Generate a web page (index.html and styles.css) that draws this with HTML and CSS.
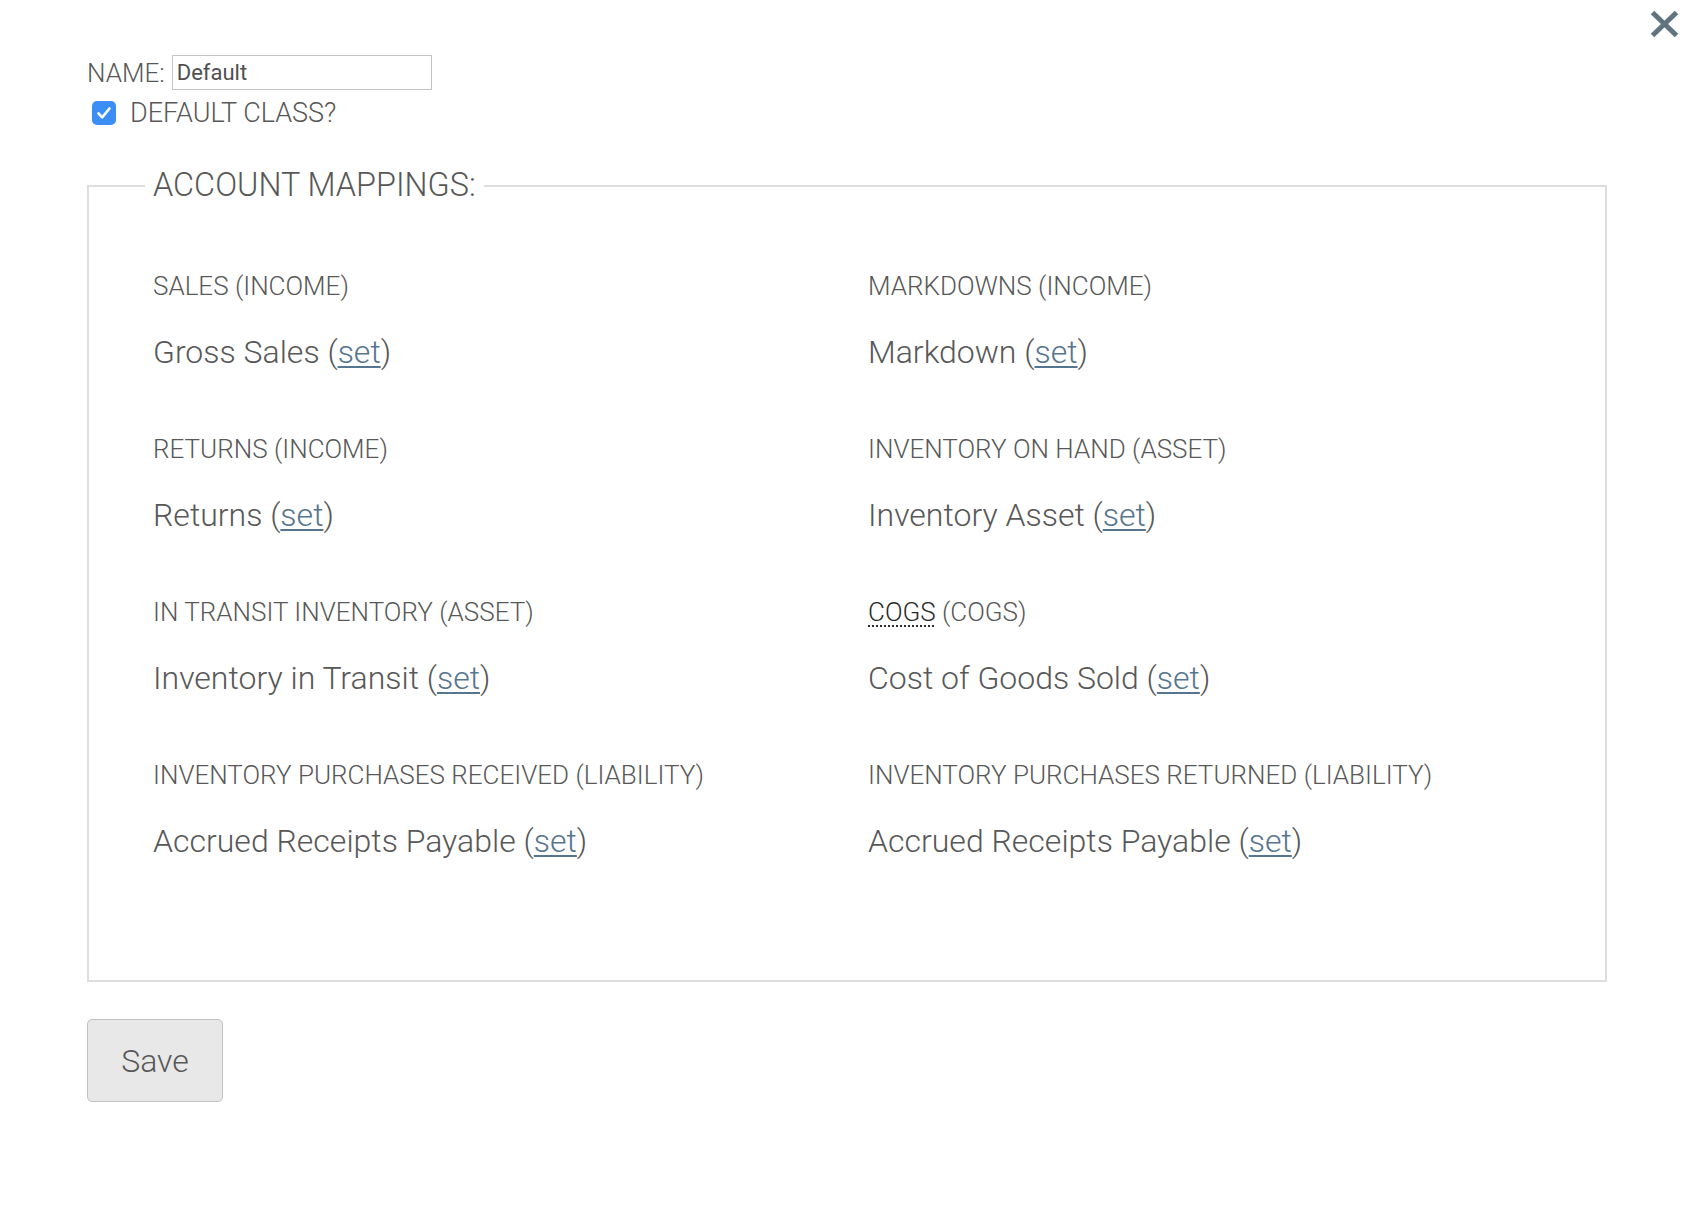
FILE: index.html
```html
<!DOCTYPE html>
<html lang="en">
<head>
<meta charset="utf-8">
<title>Class – Account Mappings</title>
<link rel="stylesheet" href="styles.css">
</head>
<body>
<div class="page">
  <button class="close" type="button" aria-label="Close">
    <svg viewBox="0 0 29 28" width="29" height="28" aria-hidden="true">
      <line x1="2.5" y1="2.5" x2="26.5" y2="25.5" />
      <line x1="26.5" y1="2.5" x2="2.5" y2="25.5" />
    </svg>
  </button>

  <form class="class-form">
    <div class="name-row">
      <label class="field-label" for="name">NAME:</label>
      <input class="text-input" id="name" type="text" value="Default">
    </div>
    <label class="check-row">
      <span class="checkbox">
        <svg viewBox="0 0 24 24" width="24" height="24" aria-hidden="true">
          <path d="M6.5 12.5 L10.2 16.3 L17.5 7.5" />
        </svg>
      </span>
      <span class="field-label check-label">DEFAULT CLASS?</span>
    </label>

    <fieldset class="mappings">
      <legend class="mappings-title">ACCOUNT MAPPINGS:</legend>
      <div class="grid">
        <div class="mapping">
          <div class="mapping-label">SALES (INCOME)</div>
          <div class="mapping-value">Gross Sales (<a href="#">set</a>)</div>
        </div>
        <div class="mapping">
          <div class="mapping-label">MARKDOWNS (INCOME)</div>
          <div class="mapping-value">Markdown (<a href="#">set</a>)</div>
        </div>
        <div class="mapping">
          <div class="mapping-label">RETURNS (INCOME)</div>
          <div class="mapping-value">Returns (<a href="#">set</a>)</div>
        </div>
        <div class="mapping">
          <div class="mapping-label">INVENTORY ON HAND (ASSET)</div>
          <div class="mapping-value">Inventory Asset (<a href="#">set</a>)</div>
        </div>
        <div class="mapping">
          <div class="mapping-label">IN TRANSIT INVENTORY (ASSET)</div>
          <div class="mapping-value">Inventory in Transit (<a href="#">set</a>)</div>
        </div>
        <div class="mapping">
          <div class="mapping-label"><abbr title="Cost of Goods Sold">COGS</abbr> (COGS)</div>
          <div class="mapping-value">Cost of Goods Sold (<a href="#">set</a>)</div>
        </div>
        <div class="mapping">
          <div class="mapping-label">INVENTORY PURCHASES RECEIVED (LIABILITY)</div>
          <div class="mapping-value">Accrued Receipts Payable (<a href="#">set</a>)</div>
        </div>
        <div class="mapping">
          <div class="mapping-label">INVENTORY PURCHASES RETURNED (LIABILITY)</div>
          <div class="mapping-value">Accrued Receipts Payable (<a href="#">set</a>)</div>
        </div>
      </div>
    </fieldset>

    <button class="save" type="button">Save</button>
  </form>
</div>
</body>
</html>
```

FILE: styles.css
```css
* {
  box-sizing: border-box;
}

html, body {
  margin: 0;
  padding: 0;
  background: #ffffff;
}

body {
  font-family: Roboto, "Liberation Sans", Arial, sans-serif;
  font-weight: 300;
  color: #585858;
}

.page {
  position: relative;
  min-height: 1220px;
  padding: 55px 77px 0 87px;
}

.close {
  position: absolute;
  top: 10px;
  left: 1650px;
  width: 29px;
  height: 28px;
  padding: 0;
  border: 0;
  background: transparent;
  cursor: pointer;
}

.close svg {
  display: block;
}

.close line {
  stroke: #5f7380;
  stroke-width: 5;
}

.class-form {
  display: flex;
  flex-direction: column;
  align-items: flex-start;
}

.name-row {
  display: flex;
  align-items: center;
  gap: 7px;
  height: 35px;
}

.field-label {
  font-size: 26px;
  line-height: 30px;
  font-weight: 300;
  color: #585858;
}

.check-label {
  font-size: 27px;
}

.text-input {
  width: 260px;
  height: 35px;
  margin: 0;
  padding: 0 4px;
  border: 1px solid #c4c4c4;
  border-radius: 0;
  font-family: Roboto, "Liberation Sans", Arial, sans-serif;
  font-size: 22px;
  font-weight: 400;
  color: #505050;
  background: #fff;
  outline: none;
}

.check-row {
  display: flex;
  align-items: center;
  gap: 14px;
  margin-top: 8px;
  height: 30px;
  cursor: pointer;
}

.checkbox {
  display: block;
  width: 24px;
  height: 24px;
  margin-left: 5px;
  border-radius: 5px;
  background: #3a8ef6;
}

.checkbox svg {
  display: block;
}

.checkbox path {
  fill: none;
  stroke: #ffffff;
  stroke-width: 2.6;
  stroke-linecap: round;
  stroke-linejoin: round;
}

.mappings {
  width: 1520px;
  margin: 39px 0 0 0;
  padding: 67px 64px 121px 64px;
  border: 2px solid #dddddd;
  min-width: 0;
}

.mappings-title {
  margin-left: -8px;
  padding: 0 8px;
  font-size: 32.4px;
  line-height: 37px;
  font-weight: 300;
  color: #585858;
}

.grid {
  display: grid;
  grid-template-columns: 715px 1fr;
  row-gap: 64px;
}

.mapping-label {
  font-size: 26px;
  line-height: 30px;
  font-weight: 300;
  color: #585858;
}

.mapping-label abbr {
  color: #2a2a2a;
  text-decoration: underline dotted #2a2a2a;
  text-decoration-thickness: 2px;
  text-underline-offset: 4px;
}

.mapping-value {
  margin-top: 33px;
  font-size: 32px;
  line-height: 36px;
  font-weight: 300;
  color: #585858;
}

.mapping-value a {
  color: #56758f;
  text-decoration: underline;
  text-decoration-thickness: 1.5px;
  text-underline-offset: 3px;
}

.save {
  width: 136px;
  height: 83px;
  margin-top: 37px;
  padding: 0;
  border: 1.5px solid #c2c2c2;
  border-radius: 5px;
  background: #e8e8e8;
  font-family: Roboto, "Liberation Sans", Arial, sans-serif;
  font-size: 32px;
  font-weight: 300;
  color: #585858;
  cursor: pointer;
}
```
